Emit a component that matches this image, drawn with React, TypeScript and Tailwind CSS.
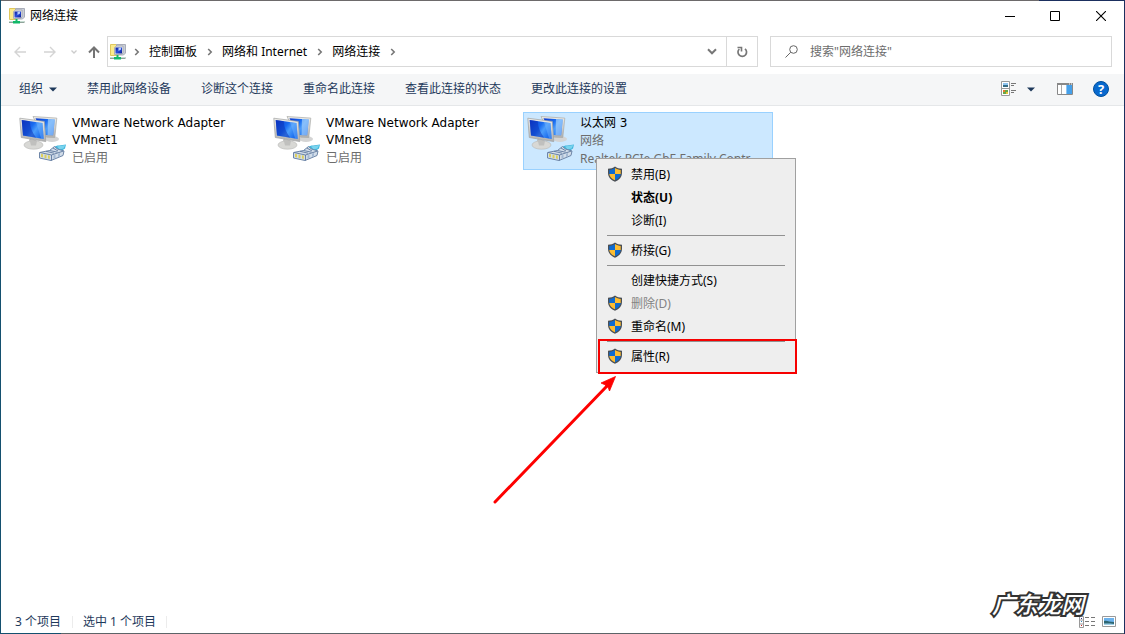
import { useId } from "react";
import type { ReactNode } from "react";

const UI_FONT = "font-['Noto_Sans','Noto_Sans_CJK_SC',sans-serif]";
const TILE_FONT = "font-['DejaVu_Sans','Noto_Sans_CJK_SC',sans-serif]";

function FolderNetworkIcon() {
  const id = useId();
  return (
    <svg width="16" height="16" viewBox="0 0 16 16" aria-hidden="true" className="shrink-0">
      <defs>
        <linearGradient id={id} x1="0" y1="0" x2="1" y2="1">
          <stop offset="0" stopColor="#0b1f9a" />
          <stop offset="0.5" stopColor="#2a4fe0" />
          <stop offset="1" stopColor="#0a1a8c" />
        </linearGradient>
      </defs>
      <path d="M.5.5h6v11h-6z" fill="#fbeb8c" stroke="#e0c75c" strokeWidth="1" />
      <path d="M6.500.5h9v8.500l-2 2h-7z" fill="#c9cdd6" stroke="#a9adb8" strokeWidth="1" />
      <path d="M4.500 3.500l2-1.500h6.500v7l-1.500 1.500h-7z" fill="#e4e6ea" stroke="#9ea2ac" strokeWidth="0.800" />
      <path d="M5.500 3.500h6.500v6H5.500z" fill={`url(#${id})`} />
      <path d="M8.500 4l2.500-.5v2L8.500 7z" fill="#b9cdf8" />
      <path d="M6.500 11h2v2h2.500v2.500H4V13h2.500z" fill="#12b869" />
      <path d="M0 13h4v2H0zM11 13h4.500v2H11z" fill="#8fa39a" />
      <path d="M0 13h4v1H0zM11 13h4.500v1H11z" fill="#c6ddd2" />
    </svg>
  );
}

function AdapterIcon() {
  const id = useId();
  const screen = `${id}s`;
  const frame = `${id}f`;
  return (
    <svg width="48" height="48" viewBox="0 0 48 48" aria-hidden="true" className="shrink-0">
      <defs>
        <linearGradient id={screen} x1="0" y1="0.200" x2="1" y2="0.800">
          <stop offset="0" stopColor="#0f3fd0" />
          <stop offset="0.400" stopColor="#1a6cf0" />
          <stop offset="0.600" stopColor="#4b9dfb" />
          <stop offset="1" stopColor="#0f60ea" />
        </linearGradient>
        <linearGradient id={frame} x1="0" y1="0" x2="0" y2="1">
          <stop offset="0" stopColor="#efeeea" />
          <stop offset="1" stopColor="#b0b0b0" />
        </linearGradient>
      </defs>
      <ellipse cx="33" cy="25" rx="7" ry="3" fill="#d4d4d4" />
      <path d="M14 2.500l23.800 1.600-2 19.400-12-.5z" fill={`url(#${frame})`} stroke="#a9aaa8" strokeWidth="0.700" />
      <path d="M16.500 4.200l19.300 1.400-1.700 15.700-10-.3z" fill={`url(#${screen})`} />
      <path d="M29 5.100l6.800.5-1.700 15.700-5.600-.2z" fill="#a9d2fb" opacity="0.650" />
      <path d="M10.500 25l7 1.500.5 4h-8z" fill="#adadab" />
      <ellipse cx="14.500" cy="31" rx="9.500" ry="4.200" fill="#d8d8d5" stroke="#b7b7b5" strokeWidth="0.600" />
      <path d="M10.500 25.500l7.500 1.500-1 4.500h-5z" fill="#c0c0be" />
      <path d="M.8 4.200l24.500 3.200 1.500 20.200L2.300 23.500z" fill={`url(#${frame})`} stroke="#9fa0a0" strokeWidth="0.700" />
      <path d="M2.700 6.100l20.800 2.800 1.200 16.200L4 21.600z" fill={`url(#${screen})`} />
      <path d="M2.700 6.100l8 1.100c.5 7 3 12 6.500 16.600L4 21.600z" fill="#0a2eb4" opacity="0.500" />
      <path d="M17 8l6.500.9 1.200 16.200-2.500-.4z" fill="#75b6fc" opacity="0.450" />
      <path d="M31 38c2-4 5-6.500 9-6.500l7-1-1 4-6 4z" fill="#3fb4dc" />
      <path d="M38 32.500l8.500-1.500-2 3.500-4 1z" fill="#7ad4ee" />
      <path d="M20.500 38.500l10-2 5-4 3 2.500 6.500 2-1 4.500-12 5-11.500-2.500z" fill="#d2dde9" stroke="#6e86a8" strokeWidth="1" strokeLinejoin="round" />
      <path d="M21 38.500l11.500 2.500L44.500 37M32.500 41v5.500M30.500 36.500l8 1.700M27 37.300l8 1.900M34 34l5 3" fill="none" stroke="#5f789e" strokeWidth="0.900" />
      <path d="M22 39.800l2 .4v3.400l-2-.5zM25.500 40.500l2 .4v3.500l-2-.5zM29 41.200l1.800.4v3.500l-1.800-.5z" fill="#dccf5e" />
      <path d="M34.500 41.500l2-.8v3.300l-2 .8zM39 39.800l2-.8v3.300l-2 .8z" fill="#a3b8d2" />
    </svg>
  );
}

function ShieldIcon() {
  return (
    <svg width="16" height="16" viewBox="0 0 16 16" aria-hidden="true" className="block shrink-0">
      <path d="M8 .4C6 1.900 3.800 2.600 1 2.700v4.100C1 11 3.700 14 8 15.700 12.300 14 15 11 15 6.800V2.700C12.200 2.600 10 1.900 8 .4z" fill="#4a4f55" />
      <path d="M8 1.900C6.300 3 4.500 3.700 2.300 3.900V8H8z" fill="#0f6bd0" />
      <path d="M8 1.900C9.700 3 11.500 3.700 13.700 3.900V8H8z" fill="#fdbd32" />
      <path d="M2.300 8H8v6.300C4.900 13 2.500 11 2.300 8z" fill="#fdbd32" />
      <path d="M13.700 8H8v6.300c3.100-1.300 5.500-3.300 5.700-6.300z" fill="#0f6bd0" />
    </svg>
  );
}

function Chevron() {
  return (
    <svg width="6" height="8" viewBox="0 0 6 8" aria-hidden="true" className="shrink-0">
      <path d="M1.200 1l3 3-3 3" fill="none" stroke="#777" strokeWidth="1.600" />
    </svg>
  );
}

function TitleBar() {
  return (
    <header className="flex h-[29px] items-center pl-2">
      <FolderNetworkIcon />
      <h1 className="ml-[5px] flex-1 text-[12px] text-black">网络连接</h1>
      <button aria-label="最小化" className="flex h-full w-[45px] items-center justify-center">
        <svg width="10" height="10" viewBox="0 0 10 10"><path d="M0 5.500h10" stroke="#000" /></svg>
      </button>
      <button aria-label="最大化" className="flex h-full w-[45px] items-center justify-center">
        <svg width="10" height="10" viewBox="0 0 10 10"><path d="M.5.5h9v9h-9z" fill="none" stroke="#000" /></svg>
      </button>
      <button aria-label="关闭" className="flex h-full w-[47px] items-center justify-center">
        <svg width="10" height="10" viewBox="0 0 10 10"><path d="M0 0l10 10M10 0L0 10" stroke="#000" strokeWidth="1.100" /></svg>
      </button>
    </header>
  );
}

function NavigationRow() {
  const crumbs = ["控制面板", "网络和 Internet", "网络连接"];
  return (
    <div className="mt-[6px] flex h-[31px] items-center pr-3">
      <div className="flex w-[106px] shrink-0 items-center">
        <button aria-label="后退" className="ml-[13px] mr-[18px]">
          <svg width="12" height="12" viewBox="0 0 12 12"><path d="M12 6H1M6 1L1 6l5 5" fill="none" stroke="#d4d4d4" strokeWidth="1.400" /></svg>
        </button>
        <button aria-label="前进" className="mr-[15px]">
          <svg width="12" height="12" viewBox="0 0 12 12"><path d="M0 6h11M6 1l5 5-5 5" fill="none" stroke="#d4d4d4" strokeWidth="1.400" /></svg>
        </button>
        <button aria-label="最近浏览的位置" className="mr-[11px]">
          <svg width="6" height="6" viewBox="0 0 6 6"><path d="M.5 1.500L3 4l2.500-2.500" fill="none" stroke="#ccc" strokeWidth="1.300" /></svg>
        </button>
        <button aria-label="上移">
          <svg width="12" height="12" viewBox="0 0 12 12"><path d="M6 12V1.500M1 6.500l5-5 5 5" fill="none" stroke="#747474" strokeWidth="2" /></svg>
        </button>
      </div>
      <nav aria-label="地址" className="flex h-full flex-1 items-center border border-[#d9d9d9] pl-[2px]">
        <FolderNetworkIcon />
        <div className="flex flex-1 items-center pl-2">
          <Chevron />
          {crumbs.map((c) => (
            <span key={c} className="flex items-center">
              <a href="#" className="ml-[9px] mr-[10px] whitespace-nowrap text-[12px] leading-4 text-black">{c}</a>
              <Chevron />
            </span>
          ))}
        </div>
        <button aria-label="上一个位置" className="flex h-full w-[29px] items-center justify-center">
          <svg width="10" height="7" viewBox="0 0 10 7"><path d="M1 1.300l4 4 4-4" fill="none" stroke="#777" strokeWidth="2" /></svg>
        </button>
        <button aria-label="刷新" className="flex h-full w-[31px] items-center justify-center border-l border-[#d9d9d9]">
          <svg width="12" height="12" viewBox="0 0 12 12">
            <path d="M9 2.800A4.300 4.300 0 1 1 3.300 3" fill="none" stroke="#777" strokeWidth="1.700" />
            <path d="M1.500 1.500h4v4" fill="none" stroke="#777" strokeWidth="1.600" />
          </svg>
        </button>
      </nav>
      <label className="ml-3 flex h-full w-[342px] items-center border border-[#d9d9d9] pl-[14px]">
        <svg width="13" height="13" viewBox="0 0 13 13" aria-hidden="true" className="shrink-0">
          <circle cx="8.500" cy="4.500" r="3.800" fill="none" stroke="#666" />
          <path d="M5.700 7.300L.5 12.500" stroke="#666" />
        </svg>
        <input
          type="search"
          aria-label="搜索网络连接"
          placeholder={'搜索"网络连接"'}
          className="ml-3 min-w-0 flex-1 text-[12px] leading-4 outline-none placeholder:text-[#6d6d6d]"
        />
      </label>
    </div>
  );
}

function Toolbar() {
  const commands = ["禁用此网络设备", "诊断这个连接", "重命名此连接", "查看此连接的状态", "更改此连接的设置"];
  return (
    <div role="toolbar" className="mt-[7px] flex h-8 items-center border-b border-[#e5e7e9] bg-[#f5f6f7] pb-px pl-[18px] pr-[15px] text-[12px] text-[#1e395b]">
      <button className="mr-[30px] flex items-center gap-[6px]">
        组织
        <svg width="8" height="5" viewBox="0 0 8 5" aria-hidden="true"><path d="M0 .5h8L4 4.500z" fill="#1e395b" /></svg>
      </button>
      <div className="flex flex-1 gap-[30px]">
        {commands.map((c) => (
          <button key={c} className="whitespace-nowrap">{c}</button>
        ))}
      </div>
      <button aria-label="更改视图" className="mr-[22px] flex items-center gap-[10px]">
        <svg width="16" height="16" viewBox="0 0 16 16">
          <path d="M.5.5h8v14h-8zM.5 7.500h8" fill="#fff" stroke="#999" />
          <path d="M2 2h5v2H2z" fill="#8fc4f0" /><path d="M2 4h5v2H2z" fill="#356b84" />
          <path d="M2 9h5v4H2z" fill="#68a744" /><path d="M2 9h2v2H2z" fill="#e7782c" /><path d="M5 11h2v2H5z" fill="#e8c53a" />
          <path d="M10 2.500h5M10 4.500h3M10 9.500h5M10 11.500h3" stroke="#777" />
        </svg>
        <svg width="8" height="5" viewBox="0 0 8 5"><path d="M0 .5h8L4 4.500z" fill="#1e395b" /></svg>
      </button>
      <button aria-label="预览窗格" className="mr-5">
        <svg width="16" height="12" viewBox="0 0 16 12">
          <path d="M.5.5h15v11H.5z" fill="#fff" stroke="#888" />
          <path d="M0 0h16v2H0z" fill="#888" />
          <path d="M12 .5h1v1h-1zM14 .5h1v1h-1z" fill="#fff" />
          <path d="M4.500 2v9" stroke="#aaa" />
          <path d="M9 2h6v9H9z" fill="#45a0ea" /><path d="M9 2h1v9H9z" fill="#8cc4f2" />
        </svg>
      </button>
      <button
        aria-label="获取帮助"
        className="flex size-4 items-center justify-center rounded-full border border-[#004f9c] bg-[#0869ce] text-[13px] font-bold leading-none text-white"
      >
        ?
      </button>
    </div>
  );
}

type Entry = { label: string; shield?: boolean; bold?: boolean; disabled?: boolean };

const MENU: Entry[][] = [
  [{ label: "禁用(B)", shield: true }, { label: "状态(U)", bold: true }, { label: "诊断(I)" }],
  [{ label: "桥接(G)", shield: true }],
  [{ label: "创建快捷方式(S)" }, { label: "删除(D)", shield: true, disabled: true }, { label: "重命名(M)", shield: true }],
  [{ label: "属性(R)", shield: true }],
];

function ContextMenu() {
  return (
    <div className={`absolute left-[72px] top-[45px] z-10 w-[200px] border border-[#a0a0a0] bg-[#eeeeee] py-1 ${UI_FONT}`}>
      <div role="menu">
        {MENU.map((group, i) => (
          <div key={i} role="group">
            {i > 0 && <div role="separator" className="my-[3px] ml-[10px] mr-[10px] h-px bg-[#919191]" />}
            {group.map((e) => (
              <button
                key={e.label}
                role="menuitem"
                disabled={e.disabled}
                className={`flex h-[23px] w-full items-center gap-2 pl-[10px] text-left text-[12px] leading-4 ${
                  e.disabled ? "text-[#838383]" : "text-black"
                } ${e.bold ? "font-bold" : ""}`}
              >
                <span className="h-[17px] w-4 shrink-0">{e.shield && <ShieldIcon />}</span>
                {e.label}
              </button>
            ))}
          </div>
        ))}
      </div>
      <div className="pointer-events-none absolute -bottom-[2px] -right-[2px] left-px h-[35px] border-2 border-[#f60000]" />
      <svg width="124" height="128" viewBox="0 0 124 128" aria-hidden="true" className="pointer-events-none absolute -left-[104px] top-[217px]">
        <path d="M2 126L114 10" stroke="#fe0000" strokeWidth="3" strokeLinecap="round" />
        <path d="M122.500 .5L108 7l4.500 2 .5 1.500 2 .5 1.500 4z" fill="#fe0000" stroke="#fe0000" strokeWidth="0.800" />
      </svg>
    </div>
  );
}

function Adapter({ name, status, device, children }: { name: string; status: string; device?: string; children?: ReactNode }) {
  const selected = Boolean(children);
  return (
    <li className={`relative h-[58px] w-[250px] border ${selected ? "border-[#99d1ff] bg-[#cce8ff]" : "border-transparent"}`}>
      <button className={`flex w-full gap-[5px] pl-[3px] pt-px text-left text-[12px] ${TILE_FONT}`}>
        <AdapterIcon />
        <span className="flex flex-1 flex-col pt-px leading-[18px]">
          <span className="leading-[17px] text-black">{name}</span>
          <span className="text-[#6d6d6d]">{status}</span>
          {device && <span className={`whitespace-nowrap text-[#6d6d6d] ${UI_FONT}`}>{device}</span>}
        </span>
      </button>
      {children}
    </li>
  );
}

function StatusBar() {
  return (
    <footer className="relative flex h-[23px] items-center pl-[14px] pr-2 text-[12px] text-[#1e395b]">
      <span className="border-r border-[#ececec] pr-[11px] leading-3">3 个项目</span>
      <span className="border-r border-[#ececec] px-[10px] leading-3">选中 1 个项目</span>
      <span className="flex-1" />
      <button aria-label="详细信息" className="mr-[6px]">
        <svg width="17" height="12" viewBox="0 0 17 12">
          <path d="M.5.5h4v11h-4zM.5 4h4M.5 8h4" fill="#fff" stroke="#999" />
          <path d="M2 2h1v1H2z" fill="#338" /><path d="M2 5h1v1H2z" fill="#38b" /><path d="M2 9h1v1H2z" fill="#c22" />
          <path d="M6 1.500h4M12 1.500h4M6 5.500h4M12 5.500h4M6 9.500h4M12 9.500h4" stroke="#777" />
        </svg>
      </button>
      <button aria-label="大图标">
        <svg width="14" height="11" viewBox="0 0 14 11">
          <path d="M.5.5h13v10H.5z" fill="#fff" stroke="#999" />
          <path d="M2 2h10v7H2z" fill="#6cb2ec" /><path d="M2 5c3-1 5 1 10 1v3H2z" fill="#2d6672" />
          <path d="M2 7.500h6l4 .5v1H2z" fill="#9fd0e8" />
        </svg>
      </button>
      <span className="pointer-events-none absolute bottom-[13px] right-10 whitespace-nowrap text-[23px] font-medium italic leading-8 text-white [-webkit-text-stroke:4px_#333] [paint-order:stroke_fill]">
        广东龙网
      </span>
    </footer>
  );
}

export default function App() {
  return (
    <div className={`flex min-h-screen flex-col border-l border-r border-l-[#14506f] border-r-[#1b2f5f] bg-white ${UI_FONT}`}>
      <div className="flex h-px">
        <div className="flex-1 bg-[#6d6a6b]" />
        <div className="w-[85px] bg-[#1b2f5f]" />
      </div>
      <TitleBar />
      <NavigationRow />
      <Toolbar />
      <main className="flex-1 px-[14px] pt-[6px]">
        <ul className="flex flex-wrap gap-1">
          <Adapter name="VMware Network Adapter VMnet1" status="已启用" />
          <Adapter name="VMware Network Adapter VMnet8" status="已启用" />
          <Adapter name="以太网 3" status="网络" device="Realtek PCIe GbE Family Contr...">
            <ContextMenu />
          </Adapter>
        </ul>
      </main>
      <StatusBar />
      <div className="flex h-px">
        <div className="w-[60px] bg-[#14506f]" />
        <div className="flex-1 bg-[#5c6468]" />
      </div>
    </div>
  );
}
